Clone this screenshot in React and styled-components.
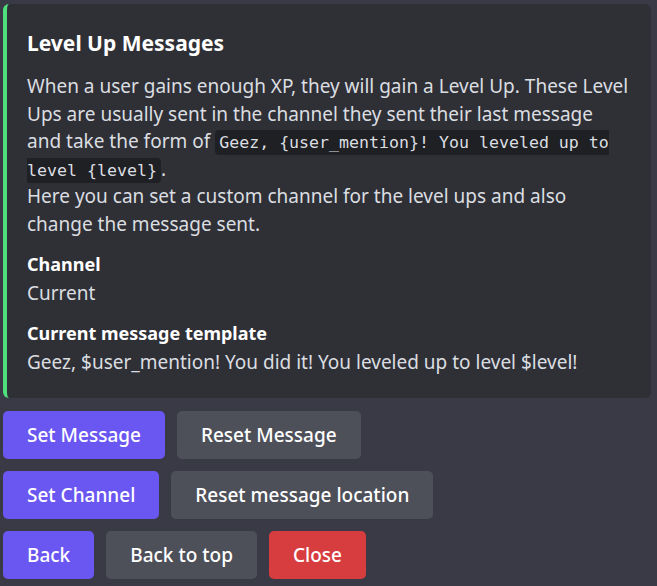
import React from 'react'
import styled, { createGlobalStyle } from 'styled-components'

const GlobalStyle = createGlobalStyle`
    body {
        margin: 0;
        background: #393a45;
        font-family: 'Noto Sans', 'Open Sans', sans-serif;
        color: #dbdee1;
    }
`

const Page = styled.div`
    padding: 4px 6px 8px 3px;
`

const Embed = styled.div`
    background: #2f3036;
    border-left: 4px solid #4fe07d;
    border-radius: 6px;
    padding: 25px 20px 20px 20px;
`

const Title = styled.div`
    font-size: 21px;
    font-weight: 700;
    color: #ffffff;
    line-height: 28px;
    margin-bottom: 16px;
`

const Description = styled.div`
    font-size: 19px;
    line-height: 27.5px;
    color: #dbdee1;
`

const Code = styled.code`
    font-family: 'DejaVu Sans Mono', 'Liberation Mono', monospace;
    font-size: 16.6px;
    line-height: 1;
    background: #1f2024;
    border-radius: 4px;
    padding: 3px 4px;
    color: #dbdee1;
`

const Field = styled.div`
    margin-top: ${p => (p.first ? 12 : 10)}px;
`

const FieldName = styled.div`
    font-size: 18px;
    font-weight: 700;
    color: #ffffff;
    line-height: 28px;
`

const FieldValue = styled.div`
    font-size: 19px;
    line-height: 31px;
    color: #dbdee1;
`

const Rows = styled.div`
    display: flex;
    flex-direction: column;
    gap: 12px;
    margin-top: 13px;
`

const Row = styled.div`
    display: flex;
    gap: 12px;
`

const colors = {
    primary: '#6a56f0',
    secondary: '#4e5059',
    danger: '#d73c3f',
}

const Button = styled.button`
    height: 48px;
    padding: 0 24px;
    border: none;
    border-radius: 5px;
    background: ${p => colors[p.variant]};
    color: #ffffff;
    font-family: 'Noto Sans', 'Open Sans', sans-serif;
    font-size: 19px;
    font-weight: 500;
`

export default function App() {
    return (
        <>
            <GlobalStyle />
            <Page>
                <Embed>
                    <Title>Level Up Messages</Title>
                    <Description>
                        When a user gains enough XP, they will gain a Level Up. These Level Ups are
                        usually sent in the channel they sent their last message and take the form of{' '}
                        <Code>Geez, {'{user_mention}'}! You leveled up to level {'{level}'}</Code>.
                        <br />
                        Here you can set a custom channel for the level ups and also change the
                        message sent.
                    </Description>
                    <Field first>
                        <FieldName>Channel</FieldName>
                        <FieldValue>Current</FieldValue>
                    </Field>
                    <Field>
                        <FieldName>Current message template</FieldName>
                        <FieldValue>Geez, $user_mention! You did it! You leveled up to level $level!</FieldValue>
                    </Field>
                </Embed>
                <Rows>
                    <Row>
                        <Button variant="primary">Set Message</Button>
                        <Button variant="secondary">Reset Message</Button>
                    </Row>
                    <Row>
                        <Button variant="primary">Set Channel</Button>
                        <Button variant="secondary">Reset message location</Button>
                    </Row>
                    <Row>
                        <Button variant="primary">Back</Button>
                        <Button variant="secondary">Back to top</Button>
                        <Button variant="danger">Close</Button>
                    </Row>
                </Rows>
            </Page>
        </>
    )
}
